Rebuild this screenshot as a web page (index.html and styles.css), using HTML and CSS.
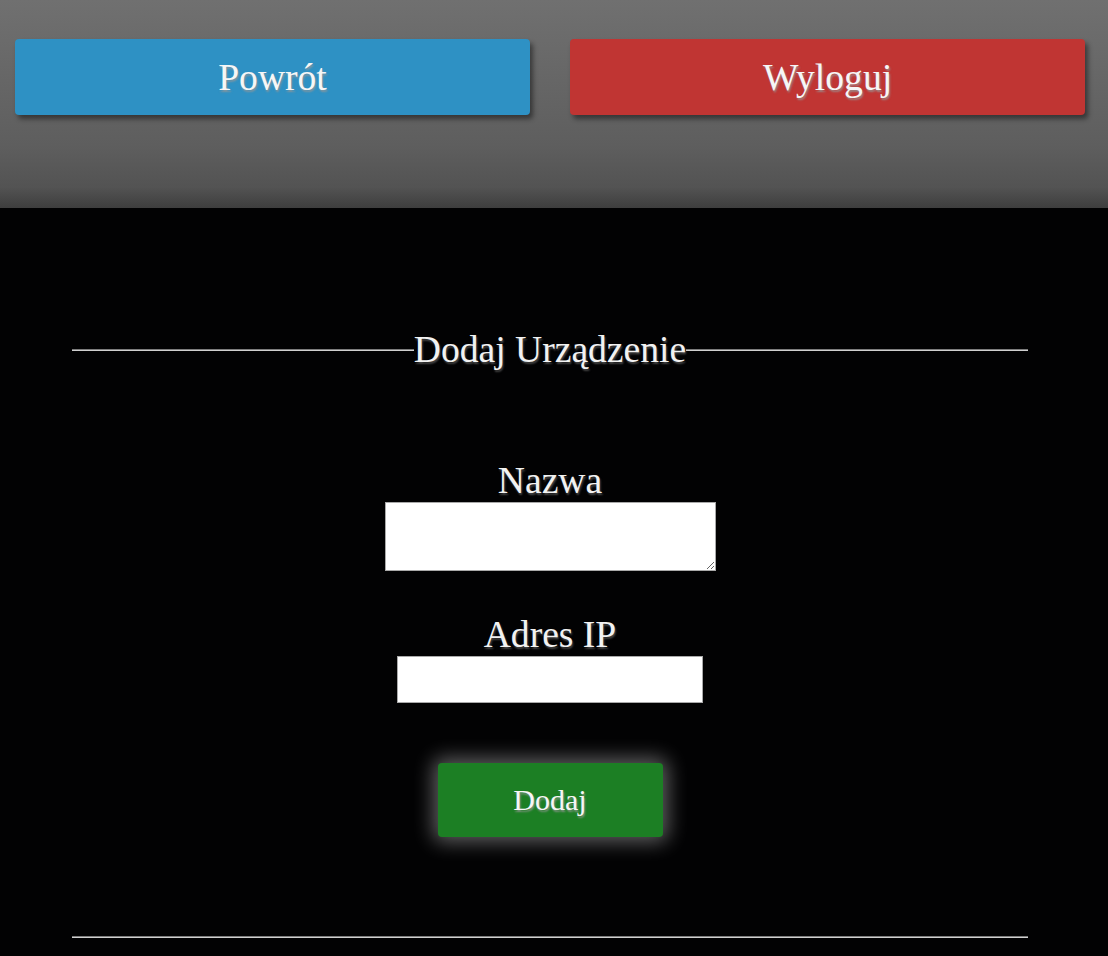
FILE: index.html
```html
<!DOCTYPE html>
<html lang="pl">
<head>
<meta charset="utf-8">
<title>Dodaj Urządzenie</title>
<link rel="stylesheet" href="styles.css">
</head>
<body>
<header class="topbar">
  <button class="btn btn-back" type="button">Powrót</button>
  <button class="btn btn-logout" type="button">Wyloguj</button>
</header>
<main class="content">
  <form class="device-form">
    <fieldset class="form-box">
      <legend class="form-title">Dodaj Urządzenie</legend>
      <div class="field field-name">
        <label class="field-label" for="nazwa">Nazwa</label>
        <textarea class="field-textarea" id="nazwa"></textarea>
      </div>
      <div class="field field-ip">
        <label class="field-label" for="ip">Adres IP</label>
        <input class="field-input" id="ip" type="text">
      </div>
      <div class="actions">
        <button class="btn-add" type="button">Dodaj</button>
      </div>
    </fieldset>
  </form>
</main>
</body>
</html>
```

FILE: styles.css
```css
html, body {
  margin: 0;
  padding: 0;
  background: #020203;
  font-family: "Liberation Serif", "Times New Roman", serif;
  color: #f2f2f2;
}

.topbar {
  height: 208px;
  box-sizing: border-box;
  padding: 39px 23px 0 15px;
  display: flex;
  align-items: flex-start;
  justify-content: space-between;
  background: linear-gradient(to bottom, #707070 0%, #5e5e5e 70%, #535353 90%, #3e3e3e 100%);
}

.btn {
  width: 515px;
  height: 76px;
  border: none;
  border-radius: 4px;
  font-family: "Liberation Serif", "Times New Roman", serif;
  font-size: 37.6px;
  color: #f6f6f6;
  text-shadow: 1px 2px 2px rgba(150, 150, 150, 0.8);
  box-shadow: 3px 4px 5px rgba(0, 0, 0, 0.45);
  cursor: pointer;
  padding: 0;
}

.btn-back {
  background: #2e91c4;
}

.btn-logout {
  background: #c03533;
}

.content {
  padding: 120px 80px 0 72px;
}

.form-box {
  margin: 0;
  padding: 0 0 99px;
  border-top: 2px groove #d0d0d0;
  border-bottom: 2px groove #d0d0d0;
  border-left: none;
  border-right: none;
  text-align: center;
}

.form-title {
  margin: 0 auto;
  padding: 0;
  font-size: 37.6px;
  line-height: 43px;
  color: #f2f2f2;
  text-shadow: 1px 2px 2px rgba(120, 120, 120, 0.6);
}

.field {
  display: flex;
  flex-direction: column;
  align-items: center;
}

.field-name {
  margin-top: 88px;
}

.field-ip {
  margin-top: 42px;
}

.field-label {
  font-size: 37.6px;
  line-height: 43px;
  color: #f2f2f2;
  text-shadow: 1px 2px 2px rgba(120, 120, 120, 0.6);
}

.field-textarea {
  box-sizing: border-box;
  width: 331px;
  height: 69px;
  margin: 0;
  border: 1px solid #a9a9a9;
  background: #ffffff;
  font-family: "Liberation Mono", monospace;
  font-size: 16px;
}

.field-input {
  box-sizing: border-box;
  width: 306px;
  height: 47px;
  margin: 0;
  border: 1px solid #a9a9a9;
  background: #ffffff;
  font-size: 16px;
}

.actions {
  display: flex;
  justify-content: center;
  margin-top: 60px;
}

.btn-add {
  width: 225px;
  height: 74px;
  border: none;
  border-radius: 4px;
  background: #1c7f24;
  font-family: "Liberation Serif", "Times New Roman", serif;
  font-size: 30px;
  color: #f6f6f6;
  text-shadow: 1px 2px 2px rgba(150, 150, 150, 0.8);
  box-shadow: 0 0 20px 5px rgba(210, 210, 210, 0.45);
  cursor: pointer;
  padding: 0;
}
```
